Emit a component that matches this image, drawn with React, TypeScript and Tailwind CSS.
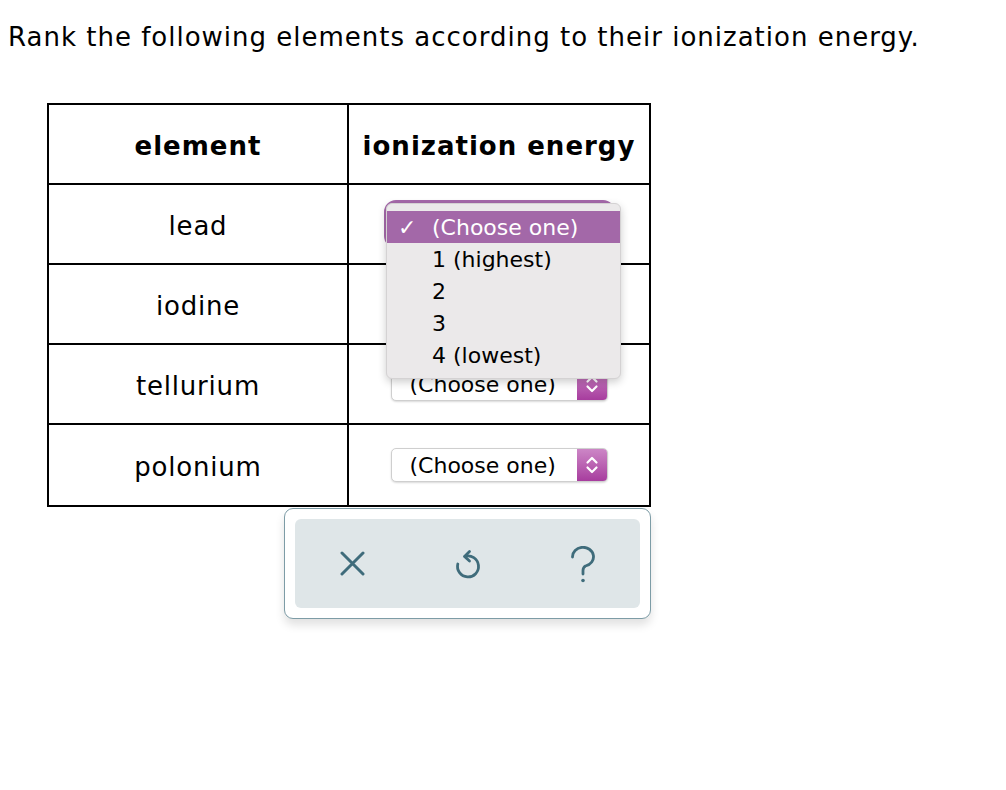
import React from "react";

const rows = ["lead", "iodine", "tellurium", "polonium"];
const options = ["1 (highest)", "2", "3", "4 (lowest)"];

function Chevrons() {
  return (
    <svg width="16" height="24" viewBox="0 0 16 24" fill="none" stroke="white" strokeWidth="2.2" strokeLinecap="round" strokeLinejoin="round">
      <path d="M3.5 9.5 L8 5 L12.5 9.5" />
      <path d="M3.5 14.5 L8 19 L12.5 14.5" />
    </svg>
  );
}

function FakeSelect({ focused = false }: { focused?: boolean }) {
  return (
    <div
      className={`flex h-[34px] w-[217px] items-stretch overflow-hidden rounded-[5px] border border-[#cfcfcf] bg-white shadow-[0_1px_2px_rgba(0,0,0,0.15)] ${
        focused ? "outline-[7px] outline-solid outline-[#a66aab]" : ""
      }`}
    >
      <span className="flex flex-1 items-center pl-[18px] text-[22px] text-black">(Choose one)</span>
      <span className="flex w-[30px] items-center justify-center bg-gradient-to-b from-[#cc86c6] to-[#a73c9e]">
        <Chevrons />
      </span>
    </div>
  );
}

export default function App() {
  return (
    <div className="relative h-[790px] w-[1006px] bg-white text-black" style={{ fontFamily: '"DejaVu Sans", Verdana, sans-serif' }}>
      <p className="pl-[8px] pt-[20px] text-[26px] leading-[34px] tracking-[1px]">
        Rank the following elements according to their ionization energy.
      </p>

      <div className="ml-[47px] mt-[49px] w-[604px] border-2 border-black">
        <div className="flex h-[80px] border-b-2 border-black">
          <div className="flex w-[300px] items-center justify-center border-r-2 border-black pt-[5px] text-[26px] font-bold tracking-[1px]">element</div>
          <div className="flex flex-1 items-center justify-center pt-[5px] text-[26px] font-bold tracking-[1px]">ionization energy</div>
        </div>
        {rows.map((r, i) => (
          <div key={r} className={`flex h-[80px] ${i < rows.length - 1 ? "border-b-2 border-black" : ""}`}>
            <div className="flex w-[300px] items-center justify-center border-r-2 border-black pt-[5px] text-[26px] tracking-[0.8px]">{r}</div>
            <div className="flex flex-1 items-center justify-center">
              <FakeSelect focused={i === 0} />
            </div>
          </div>
        ))}
      </div>

      <div className="ml-[284px] mt-[1px] h-[111px] w-[367px] rounded-[9px] border-[1.5px] border-[#7d9ca6] bg-white p-[10px] shadow-[0_6px_10px_rgba(0,0,0,0.12)]">
        <div className="flex h-full items-center justify-center rounded-[6px] bg-[#dfe6e8]">
          <div className="flex w-[116px] justify-center">
            <svg width="25" height="25" viewBox="0 0 25 25" fill="none" stroke="#3f6c7b" strokeWidth="3" strokeLinecap="round">
              <path d="M2 2 L23 23 M23 2 L2 23" />
            </svg>
          </div>
          <div className="flex w-[116px] justify-center">
            <svg width="28" height="32" viewBox="0 0 28 32" fill="none" stroke="#3f6c7b" strokeWidth="2.8" strokeLinecap="round" strokeLinejoin="round">
              <path d="M3.8 16 A10.5 10.5 0 1 0 11 8.4" />
              <path d="M15.5 3.5 L10.5 8.4 L15.5 13" />
            </svg>
          </div>
          <div className="flex w-[116px] justify-center pt-[2px]">
            <svg width="26" height="38" viewBox="0 0 26 38" fill="none" stroke="#3f6c7b" strokeWidth="2.8" strokeLinecap="round">
              <path d="M2.5 11 A10.5 9.5 0 1 1 15.5 20 Q13 21.5 13 24.5 L13 28" />
              <circle cx="13" cy="34.5" r="1.8" fill="#3f6c7b" stroke="none" />
            </svg>
          </div>
        </div>
      </div>

      {/* open dropdown menu */}
      <div className="absolute left-[386px] top-[203px] w-[235px] rounded-[6px] border border-[#d4d2d3] bg-[#ebe9ea] py-[7px] shadow-[0_3px_8px_rgba(0,0,0,0.2)]">
        <div className="flex h-[32px] items-center bg-[#a368a8] text-[22px] text-white">
          <span className="w-[45px] pl-[11px] font-bold">✓</span>
          <span>(Choose one)</span>
        </div>
        {options.map((o) => (
          <div key={o} className="flex h-[32px] items-center text-[22px] text-black">
            <span className="w-[45px]" />
            <span>{o}</span>
          </div>
        ))}
      </div>
    </div>
  );
}
